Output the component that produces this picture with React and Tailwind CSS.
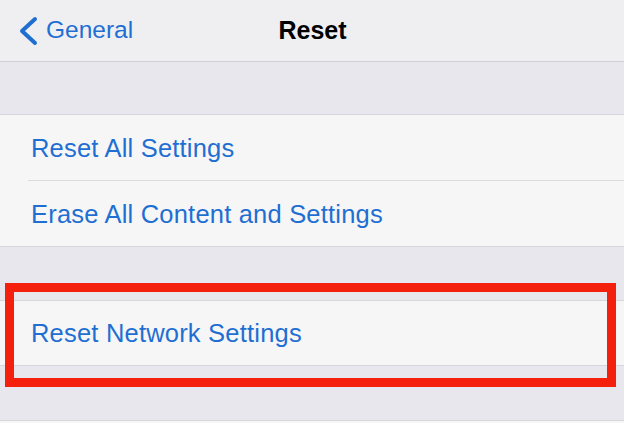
export default function App() {
  const font = { fontFamily: '"Liberation Sans", Arial, sans-serif' };
  return (
    <div className="relative w-[624px] h-[423px] overflow-hidden bg-[#e8e7ed]" style={font}>
      {/* Nav bar */}
      <div className="relative h-[62px] bg-[#efeff2] border-b border-[#cfcfd4] flex items-center">
        <div className="flex items-center pl-[17px] gap-[7px] text-[#1f6fd2] text-[24.5px] leading-none">
          <svg width="22" height="30" viewBox="0 0 22 30" className="mt-[1px]">
            <polyline points="18,3 5,15 18,27" fill="none" stroke="#1f6fd2" strokeWidth="4" strokeLinecap="round" strokeLinejoin="round" />
          </svg>
          <span>General</span>
        </div>
        <div className="absolute inset-0 flex items-center justify-center pointer-events-none">
          <span className="text-[25px] font-bold text-black leading-none ml-[1px]">Reset</span>
        </div>
      </div>

      {/* Spacer */}
      <div className="h-[52px]" />

      {/* Group 1 */}
      <div className="bg-[#f6f6f7] border-y border-[#d6d6da]">
        <div className="h-[65px] flex items-center pl-[31px] pt-[2px] text-[25.5px] text-[#1f6fd2] leading-none tracking-[0.2px]">
          Reset All Settings
        </div>
        <div className="ml-[28px] h-px bg-[#dcdce0]" />
        <div className="h-[65px] flex items-center pl-[31px] pt-[2px] text-[25.5px] text-[#1f6fd2] leading-none tracking-[0.2px]">
          Erase All Content and Settings
        </div>
      </div>

      <div className="h-[53px]" />

      {/* Group 2 */}
      <div className="bg-[#f6f6f7] border-y border-[#d6d6da]">
        <div className="h-[64px] flex items-center pl-[31px] pt-[2px] text-[25.5px] text-[#1f6fd2] leading-none tracking-[0.2px]">
          Reset Network Settings
        </div>
      </div>

      <div className="h-[54px]" />
      <div className="h-[10px] bg-[#f6f6f7] border-t border-[#d6d6da]" />

      {/* Red annotation box */}
      <div className="absolute left-[5px] top-[283px] w-[611px] h-[104px] border-[9px] border-[#f41f0c]" />
    </div>
  );
}
